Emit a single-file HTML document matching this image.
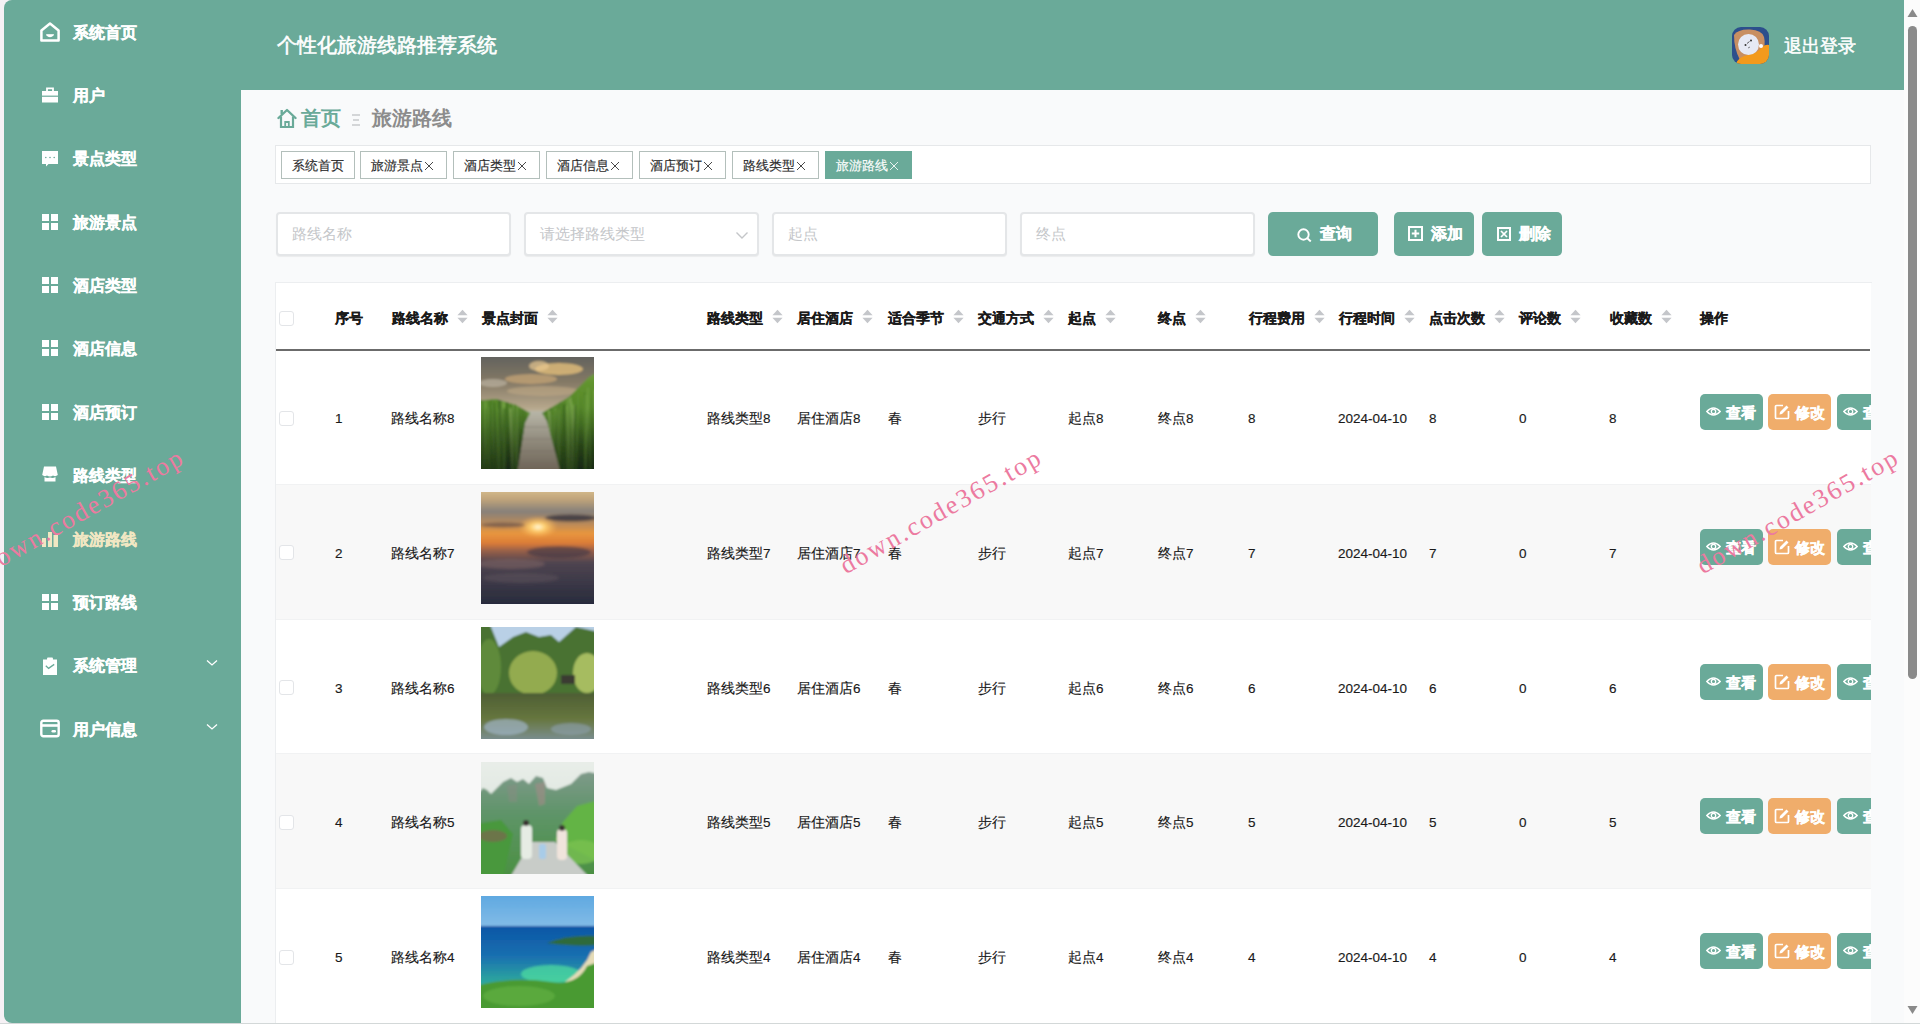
<!DOCTYPE html>
<html><head><meta charset="utf-8"><title>旅游路线</title>
<style>
*{box-sizing:border-box;margin:0;padding:0}
html,body{width:1920px;height:1024px;overflow:hidden}
body{position:relative;background:#f6f1f5;font-family:"Liberation Sans",sans-serif;color:#222}
.a{position:absolute}
.t{position:absolute;white-space:nowrap;line-height:1}
#side{left:4px;top:0;width:237px;height:1023px;background:#6aaa99;border-radius:8px 0 0 8px}
#head{left:241px;top:0;width:1663px;height:90px;background:#6aaa99}
#main{left:241px;top:90px;width:1663px;height:934px;background:#f9fafb}
#sbar{left:1904px;top:0;width:16px;height:1024px;background:#fcfcfc}
.mi{font-size:16px;font-weight:bold;-webkit-text-stroke:0.3px currentColor}
.tag{position:absolute;top:151px;height:28px;border:1px solid #b3bfbb;background:#fff;font-size:13px;color:#2a2a2a;-webkit-text-stroke:0.15px currentColor;line-height:28px;padding-left:10px;white-space:nowrap}
.tag.on{background:#6aaa99;border-color:#6aaa99;color:#fff}
.inp{position:absolute;top:212px;width:235px;height:44px;border:2px solid #e4e6e8;border-radius:4px;background:#fff;box-shadow:0 1px 1px rgba(0,0,0,.06)}
.ph{position:absolute;left:14px;top:12px;font-size:15px;line-height:16px;color:#c4c6c9;white-space:nowrap}
.btn{position:absolute;top:212px;height:44px;border-radius:5px;background:#6aaa99;color:#fff;font-size:16px;font-weight:bold;-webkit-text-stroke:0.3px #fff}
.th{position:absolute;top:311px;font-size:14px;font-weight:bold;line-height:14px;color:#1a1a1a;white-space:nowrap;-webkit-text-stroke:0.25px #1a1a1a}
.srt{display:inline-block;vertical-align:top;margin-left:9px;margin-top:-2px}
.td{position:absolute;font-size:13.5px;line-height:14px;color:#1a1a1a;white-space:nowrap;-webkit-text-stroke:0.15px #1a1a1a}
.ab{position:absolute;height:36px;width:63px;border-radius:5px;color:#fff;font-size:15px;font-weight:bold;-webkit-text-stroke:0.35px #fff}
.wm{position:absolute;font-family:"Liberation Serif",serif;font-size:26px;color:#ec7aa0;letter-spacing:2.25px;white-space:nowrap;transform-origin:0 100%;transform:rotate(-29.5deg);line-height:24px}
</style></head><body>

<div class="a" id="side"></div>
<div class="a" style="left:40px;top:21.6px;width:20px;height:20px"><svg width="20" height="20" viewBox="0 0 20 20"><path d="M10 1.6 L18.6 8.4 V18.6 H1.4 V8.4 Z" fill="none" stroke="#fff" stroke-width="2.5" stroke-linejoin="round"/><path d="M6.6 12.8 Q10 16.4 13.4 12.8 Z" fill="#fff" stroke="#fff" stroke-width="1.2" stroke-linejoin="round"/></svg></div>
<div class="t mi" style="left:73px;top:24.6px;color:#fff">系统首页</div>
<div class="a" style="left:40px;top:85.0px;width:20px;height:20px"><svg width="20" height="20" viewBox="0 0 20 20"><rect x="2" y="6" width="16" height="11.5" fill="#fff"/><path d="M7 6 V3.3 H13 V6" fill="none" stroke="#fff" stroke-width="1.8"/><rect x="2" y="10.6" width="16" height="1.2" fill="#6aaa99"/></svg></div>
<div class="t mi" style="left:73px;top:88.0px;color:#fff">用户</div>
<div class="a" style="left:40px;top:148.3px;width:20px;height:20px"><svg width="20" height="20" viewBox="0 0 20 20"><path d="M2 3 H18 V16 H8.5 L6 18.5 V16 H2 Z" fill="#fff"/><circle cx="5.8" cy="9.5" r="0.8" fill="#6aaa99"/><circle cx="10" cy="9.5" r="0.8" fill="#6aaa99"/><circle cx="14.2" cy="9.5" r="0.8" fill="#6aaa99"/></svg></div>
<div class="t mi" style="left:73px;top:151.3px;color:#fff">景点类型</div>
<div class="a" style="left:40px;top:211.7px;width:20px;height:20px"><svg width="20" height="20" viewBox="0 0 20 20"><rect x="2" y="2" width="7" height="7" fill="#fff"/><rect x="11" y="2" width="7" height="7" fill="#fff"/><rect x="2" y="11" width="7" height="7" fill="#fff"/><rect x="11" y="11" width="7" height="7" fill="#fff"/></svg></div>
<div class="t mi" style="left:73px;top:214.7px;color:#fff">旅游景点</div>
<div class="a" style="left:40px;top:275.1px;width:20px;height:20px"><svg width="20" height="20" viewBox="0 0 20 20"><rect x="2" y="2" width="7" height="7" fill="#fff"/><rect x="11" y="2" width="7" height="7" fill="#fff"/><rect x="2" y="11" width="7" height="7" fill="#fff"/><rect x="11" y="11" width="7" height="7" fill="#fff"/></svg></div>
<div class="t mi" style="left:73px;top:278.1px;color:#fff">酒店类型</div>
<div class="a" style="left:40px;top:338.4px;width:20px;height:20px"><svg width="20" height="20" viewBox="0 0 20 20"><rect x="2" y="2" width="7" height="7" fill="#fff"/><rect x="11" y="2" width="7" height="7" fill="#fff"/><rect x="2" y="11" width="7" height="7" fill="#fff"/><rect x="11" y="11" width="7" height="7" fill="#fff"/></svg></div>
<div class="t mi" style="left:73px;top:341.4px;color:#fff">酒店信息</div>
<div class="a" style="left:40px;top:401.8px;width:20px;height:20px"><svg width="20" height="20" viewBox="0 0 20 20"><rect x="2" y="2" width="7" height="7" fill="#fff"/><rect x="11" y="2" width="7" height="7" fill="#fff"/><rect x="2" y="11" width="7" height="7" fill="#fff"/><rect x="11" y="11" width="7" height="7" fill="#fff"/></svg></div>
<div class="t mi" style="left:73px;top:404.8px;color:#fff">酒店预订</div>
<div class="a" style="left:40px;top:465.2px;width:20px;height:20px"><svg width="20" height="20" viewBox="0 0 20 20"><path d="M4 1.5 H16 L17.8 10 Q15.5 12 13 10.5 Q10 12.3 7 10.5 Q4.5 12 2.2 10 Z" fill="#fff"/><path d="M4.5 12 Q7 13.5 10 12.5 Q13 13.5 15.5 12 V16.5 H4.5 Z" fill="#fff"/></svg></div>
<div class="t mi" style="left:73px;top:468.2px;color:#fff">路线类型</div>
<div class="a" style="left:40px;top:528.6px;width:20px;height:20px"><svg width="20" height="20" viewBox="0 0 20 20"><rect x="2" y="9" width="4" height="9" fill="#f1e7c3"/><rect x="8" y="3" width="4" height="15" fill="#f1e7c3"/><rect x="13.5" y="6" width="4.5" height="12" fill="#f1e7c3"/></svg></div>
<div class="t mi" style="left:73px;top:531.6px;color:#f1e7c3">旅游路线</div>
<div class="a" style="left:40px;top:591.9px;width:20px;height:20px"><svg width="20" height="20" viewBox="0 0 20 20"><rect x="2" y="2" width="7" height="7" fill="#fff"/><rect x="11" y="2" width="7" height="7" fill="#fff"/><rect x="2" y="11" width="7" height="7" fill="#fff"/><rect x="11" y="11" width="7" height="7" fill="#fff"/></svg></div>
<div class="t mi" style="left:73px;top:594.9px;color:#fff">预订路线</div>
<div class="a" style="left:40px;top:655.3px;width:20px;height:20px"><svg width="20" height="20" viewBox="0 0 20 20"><rect x="3" y="4.5" width="14" height="15.5" fill="#fff"/><rect x="7" y="2.6" width="6" height="3" rx="1" fill="#fff"/><path d="M5.8 10.8 L8.6 13.4 L14.2 9.4" fill="none" stroke="#6aaa99" stroke-width="1.3"/></svg></div>
<div class="t mi" style="left:73px;top:658.3px;color:#fff">系统管理</div>
<svg class="a" style="left:206px;top:659.3px" width="12" height="8" viewBox="0 0 12 8"><path d="M1 1.5 L6 6 L11 1.5" fill="none" stroke="#fff" stroke-width="1.3"/></svg>
<div class="a" style="left:40px;top:718.7px;width:20px;height:20px"><svg width="20" height="20" viewBox="0 0 20 20"><rect x="1.3" y="1.8" width="17.4" height="15.4" rx="2" fill="none" stroke="#fff" stroke-width="2.4"/><rect x="1.2" y="5.2" width="17.6" height="2.6" fill="#fff"/><rect x="11.5" y="11" width="4.5" height="2.6" rx="1.3" fill="#fff"/></svg></div>
<div class="t mi" style="left:73px;top:721.7px;color:#fff">用户信息</div>
<svg class="a" style="left:206px;top:722.7px" width="12" height="8" viewBox="0 0 12 8"><path d="M1 1.5 L6 6 L11 1.5" fill="none" stroke="#fff" stroke-width="1.3"/></svg>
<div class="a" id="head"></div>
<div class="t" style="left:277px;top:35px;font-size:20px;color:#fff;-webkit-text-stroke:0.6px #fff">个性化旅游线路推荐系统</div>
<svg class="a" style="left:1732px;top:27px" width="37" height="37" viewBox="0 0 37 37">
<defs><clipPath id="avc"><rect x="0" y="0" width="37" height="37" rx="9"/></clipPath></defs>
<g clip-path="url(#avc)"><rect width="37" height="37" fill="#2c4f8c"/>
<path d="M2 8 Q6 2 18 2.5 Q30 3 32 10 Q34 18 30 26 L8 33 Q2 22 2 8 Z" fill="#c88f62"/>
<path d="M4 37 Q6 30 16 28 Q26 26 30 20 Q34 17 37 18 L37 37 Z" fill="#f39a1c"/>
<circle cx="16.5" cy="17.5" r="10.5" fill="#e6e9f4"/>
<circle cx="13.5" cy="18" r="1" fill="#333"/><circle cx="19" cy="13.5" r="1" fill="#333"/><path d="M15 16.5 L17.5 14.5" stroke="#333" stroke-width="0.8"/><path d="M16 21 L18 20" stroke="#555" stroke-width="0.7"/>
<circle cx="29" cy="19" r="2" fill="#fff"/></g></svg>
<div class="t" style="left:1784px;top:37px;font-size:18px;color:#fff;-webkit-text-stroke:0.5px #fff">退出登录</div>
<div class="a" id="main"></div>
<svg class="a" style="left:277px;top:108px" width="20" height="21" viewBox="0 0 20 21"><path d="M1.5 10 L10 2 L18.5 10" fill="none" stroke="#6aaa99" stroke-width="2.4" stroke-linejoin="round" stroke-linecap="round"/><path d="M4 8.5 V19 H16 V8.5" fill="none" stroke="#6aaa99" stroke-width="2.2"/><path d="M8.2 19 V14 H11.8 V19" fill="none" stroke="#6aaa99" stroke-width="1.8"/><rect x="3.5" y="2" width="2.4" height="4" fill="#6aaa99"/></svg>
<div class="t" style="left:301px;top:108px;font-size:20px;font-weight:bold;color:#6aaa99">首页</div>
<div class="a" style="left:352px;top:114px;width:8px;height:1.5px;background:#d4d6d8"></div><div class="a" style="left:353px;top:119px;width:6px;height:1.5px;background:#d4d6d8"></div><div class="a" style="left:352px;top:124px;width:8px;height:1.5px;background:#d4d6d8"></div>
<div class="t" style="left:372px;top:108px;font-size:20px;font-weight:bold;color:#8c8c8c">旅游路线</div>
<div class="a" style="left:275px;top:145px;width:1596px;height:39px;background:#fff;border:1px solid #e6e8ea"></div>
<div class="tag" style="left:281px;width:74px">系统首页</div>
<div class="tag" style="left:360px;width:87px">旅游景点<svg style="display:inline-block;vertical-align:top;margin-top:9px;margin-left:1px" width="10" height="10" viewBox="0 0 10 10"><path d="M1 1 L9 9 M9 1 L1 9" stroke="currentColor" stroke-width="1" opacity="0.85"/></svg></div>
<div class="tag" style="left:453px;width:87px">酒店类型<svg style="display:inline-block;vertical-align:top;margin-top:9px;margin-left:1px" width="10" height="10" viewBox="0 0 10 10"><path d="M1 1 L9 9 M9 1 L1 9" stroke="currentColor" stroke-width="1" opacity="0.85"/></svg></div>
<div class="tag" style="left:546px;width:87px">酒店信息<svg style="display:inline-block;vertical-align:top;margin-top:9px;margin-left:1px" width="10" height="10" viewBox="0 0 10 10"><path d="M1 1 L9 9 M9 1 L1 9" stroke="currentColor" stroke-width="1" opacity="0.85"/></svg></div>
<div class="tag" style="left:639px;width:87px">酒店预订<svg style="display:inline-block;vertical-align:top;margin-top:9px;margin-left:1px" width="10" height="10" viewBox="0 0 10 10"><path d="M1 1 L9 9 M9 1 L1 9" stroke="currentColor" stroke-width="1" opacity="0.85"/></svg></div>
<div class="tag" style="left:732px;width:87px">路线类型<svg style="display:inline-block;vertical-align:top;margin-top:9px;margin-left:1px" width="10" height="10" viewBox="0 0 10 10"><path d="M1 1 L9 9 M9 1 L1 9" stroke="currentColor" stroke-width="1" opacity="0.85"/></svg></div>
<div class="tag on" style="left:825px;width:87px">旅游路线<svg style="display:inline-block;vertical-align:top;margin-top:9px;margin-left:1px" width="10" height="10" viewBox="0 0 10 10"><path d="M1 1 L9 9 M9 1 L1 9" stroke="currentColor" stroke-width="1" opacity="0.85"/></svg></div>
<div class="inp" style="left:276px"><div class="ph">路线名称</div></div>
<div class="inp" style="left:524px"><div class="ph">请选择路线类型</div><svg class="a" style="left:209px;top:17px" width="14" height="9" viewBox="0 0 14 9"><path d="M1.5 1.5 L7 7 L12.5 1.5" fill="none" stroke="#c4c6c9" stroke-width="1.4"/></svg></div>
<div class="inp" style="left:772px"><div class="ph">起点</div></div>
<div class="inp" style="left:1020px"><div class="ph">终点</div></div>
<div class="btn" style="left:1268px;width:110px"><svg class="a" style="left:29px;top:16px" width="15" height="14" viewBox="0 0 15 14"><circle cx="6.5" cy="6.5" r="5.2" fill="none" stroke="#fff" stroke-width="1.9"/><path d="M10.3 10.3 L13.8 13.5" stroke="#fff" stroke-width="1.9"/></svg><div class="t" style="left:52px;top:14px">查询</div></div>
<div class="btn" style="left:1394px;width:80px"><svg class="a" style="left:14px;top:14px" width="15" height="15" viewBox="0 0 15 15"><rect x="1" y="1" width="13" height="13" fill="none" stroke="#fff" stroke-width="2"/><path d="M7.5 3.8 V11.2 M3.8 7.5 H11.2" stroke="#fff" stroke-width="2"/></svg><div class="t" style="left:37px;top:14px">添加</div></div>
<div class="btn" style="left:1482px;width:80px"><svg class="a" style="left:15px;top:15px" width="14" height="14" viewBox="0 0 14 14"><rect x="1" y="1" width="12" height="12" fill="none" stroke="#fff" stroke-width="2"/><path d="M4 4 L10 10 M10 4 L4 10" stroke="#fff" stroke-width="1.7"/></svg><div class="t" style="left:37px;top:14px">删除</div></div>
<div class="a" style="left:275px;top:283px;width:1px;height:741px;background:#eceef0"></div>
<div class="a" style="left:275px;top:282px;width:1597px;height:1px;background:#eceef0"></div>
<div class="a" style="left:276px;top:283px;width:1595px;height:741px;background:#fff;overflow:hidden" id="tbl">
<div class="a" style="left:0;top:67.00px;width:1595px;height:134.75px;background:#fff;border-bottom:1px solid #f1f2f3"></div>
<div class="a" style="left:0;top:201.75px;width:1595px;height:134.75px;background:#f8f8f8;border-bottom:1px solid #f1f2f3"></div>
<div class="a" style="left:0;top:336.50px;width:1595px;height:134.75px;background:#fff;border-bottom:1px solid #f1f2f3"></div>
<div class="a" style="left:0;top:471.25px;width:1595px;height:134.75px;background:#f8f8f8;border-bottom:1px solid #f1f2f3"></div>
<div class="a" style="left:0;top:606.00px;width:1595px;height:134.75px;background:#fff;border-bottom:1px solid #f1f2f3"></div>
<div class="a" style="left:0;top:66px;width:1594px;height:2px;background:#6b6b6b"></div>
<div class="a" style="left:3px;top:28px;width:15px;height:15px;border:1px solid #e3e5e8;border-radius:3px;background:#fff"></div>
<div class="th" style="left:59.0px;top:28px">序号</div>
<div class="th" style="left:116.0px;top:28px">路线名称<svg class="srt" width="11" height="15" viewBox="0 0 11 15"><path d="M5.5 0.8 L10.6 6.2 H0.4 Z" fill="#c4c6ca"/><path d="M5.5 14.2 L10.6 8.8 H0.4 Z" fill="#c4c6ca"/></svg></div>
<div class="th" style="left:206.0px;top:28px">景点封面<svg class="srt" width="11" height="15" viewBox="0 0 11 15"><path d="M5.5 0.8 L10.6 6.2 H0.4 Z" fill="#c4c6ca"/><path d="M5.5 14.2 L10.6 8.8 H0.4 Z" fill="#c4c6ca"/></svg></div>
<div class="th" style="left:431.0px;top:28px">路线类型<svg class="srt" width="11" height="15" viewBox="0 0 11 15"><path d="M5.5 0.8 L10.6 6.2 H0.4 Z" fill="#c4c6ca"/><path d="M5.5 14.2 L10.6 8.8 H0.4 Z" fill="#c4c6ca"/></svg></div>
<div class="th" style="left:521.3px;top:28px">居住酒店<svg class="srt" width="11" height="15" viewBox="0 0 11 15"><path d="M5.5 0.8 L10.6 6.2 H0.4 Z" fill="#c4c6ca"/><path d="M5.5 14.2 L10.6 8.8 H0.4 Z" fill="#c4c6ca"/></svg></div>
<div class="th" style="left:611.5px;top:28px">适合季节<svg class="srt" width="11" height="15" viewBox="0 0 11 15"><path d="M5.5 0.8 L10.6 6.2 H0.4 Z" fill="#c4c6ca"/><path d="M5.5 14.2 L10.6 8.8 H0.4 Z" fill="#c4c6ca"/></svg></div>
<div class="th" style="left:701.8px;top:28px">交通方式<svg class="srt" width="11" height="15" viewBox="0 0 11 15"><path d="M5.5 0.8 L10.6 6.2 H0.4 Z" fill="#c4c6ca"/><path d="M5.5 14.2 L10.6 8.8 H0.4 Z" fill="#c4c6ca"/></svg></div>
<div class="th" style="left:792.1px;top:28px">起点<svg class="srt" width="11" height="15" viewBox="0 0 11 15"><path d="M5.5 0.8 L10.6 6.2 H0.4 Z" fill="#c4c6ca"/><path d="M5.5 14.2 L10.6 8.8 H0.4 Z" fill="#c4c6ca"/></svg></div>
<div class="th" style="left:882.3px;top:28px">终点<svg class="srt" width="11" height="15" viewBox="0 0 11 15"><path d="M5.5 0.8 L10.6 6.2 H0.4 Z" fill="#c4c6ca"/><path d="M5.5 14.2 L10.6 8.8 H0.4 Z" fill="#c4c6ca"/></svg></div>
<div class="th" style="left:972.6px;top:28px">行程费用<svg class="srt" width="11" height="15" viewBox="0 0 11 15"><path d="M5.5 0.8 L10.6 6.2 H0.4 Z" fill="#c4c6ca"/><path d="M5.5 14.2 L10.6 8.8 H0.4 Z" fill="#c4c6ca"/></svg></div>
<div class="th" style="left:1062.9px;top:28px">行程时间<svg class="srt" width="11" height="15" viewBox="0 0 11 15"><path d="M5.5 0.8 L10.6 6.2 H0.4 Z" fill="#c4c6ca"/><path d="M5.5 14.2 L10.6 8.8 H0.4 Z" fill="#c4c6ca"/></svg></div>
<div class="th" style="left:1153.2px;top:28px">点击次数<svg class="srt" width="11" height="15" viewBox="0 0 11 15"><path d="M5.5 0.8 L10.6 6.2 H0.4 Z" fill="#c4c6ca"/><path d="M5.5 14.2 L10.6 8.8 H0.4 Z" fill="#c4c6ca"/></svg></div>
<div class="th" style="left:1243.4px;top:28px">评论数<svg class="srt" width="11" height="15" viewBox="0 0 11 15"><path d="M5.5 0.8 L10.6 6.2 H0.4 Z" fill="#c4c6ca"/><path d="M5.5 14.2 L10.6 8.8 H0.4 Z" fill="#c4c6ca"/></svg></div>
<div class="th" style="left:1333.7px;top:28px">收藏数<svg class="srt" width="11" height="15" viewBox="0 0 11 15"><path d="M5.5 0.8 L10.6 6.2 H0.4 Z" fill="#c4c6ca"/><path d="M5.5 14.2 L10.6 8.8 H0.4 Z" fill="#c4c6ca"/></svg></div>
<div class="th" style="left:1424.0px;top:28px">操作</div>
<div class="a" style="left:3px;top:127.5px;width:15px;height:15px;border:1px solid #e3e5e8;border-radius:3px;background:#fff"></div>
<div class="td" style="left:59px;top:129.0px">1</div>
<div class="td" style="left:115px;top:129.0px">路线名称8</div>
<div class="td" style="left:431px;top:129.0px">路线类型8</div>
<div class="td" style="left:521px;top:129.0px">居住酒店8</div>
<div class="td" style="left:612px;top:129.0px">春</div>
<div class="td" style="left:702px;top:129.0px">步行</div>
<div class="td" style="left:792px;top:129.0px">起点8</div>
<div class="td" style="left:882px;top:129.0px">终点8</div>
<div class="td" style="left:972px;top:129.0px">8</div>
<div class="td" style="left:1062px;top:129.0px">2024-04-10</div>
<div class="td" style="left:1153px;top:129.0px">8</div>
<div class="td" style="left:1243px;top:129.0px">0</div>
<div class="td" style="left:1333px;top:129.0px">8</div>
<div class="a" style="left:205px;top:74.3px;width:113px;height:112px;overflow:hidden"><svg width="113" height="112" viewBox="0 0 113 112"><defs>
<filter id="b0" x="-10%" y="-10%" width="120%" height="120%"><feGaussianBlur stdDeviation="0.9"/></filter>
<linearGradient id="s0" x1="0" y1="0" x2="0" y2="1"><stop offset="0" stop-color="#5c5e5c"/><stop offset="0.25" stop-color="#857a66"/><stop offset="0.45" stop-color="#b4a58a"/><stop offset="0.55" stop-color="#cfc4ae"/></linearGradient>
<linearGradient id="g0" x1="0" y1="0" x2="0" y2="1"><stop offset="0" stop-color="#8fa86a"/><stop offset="0.25" stop-color="#62942e"/><stop offset="0.6" stop-color="#4a7a26"/><stop offset="1" stop-color="#1e3014"/></linearGradient>
<linearGradient id="d0" x1="0" y1="0" x2="0" y2="1"><stop offset="0.45" stop-color="#142410" stop-opacity="0"/><stop offset="1" stop-color="#142410" stop-opacity="0.75"/></linearGradient>
<linearGradient id="p0" x1="0" y1="0" x2="0" y2="1"><stop offset="0" stop-color="#b8b6a8"/><stop offset="0.5" stop-color="#8e887a"/><stop offset="1" stop-color="#6a6052"/></linearGradient>
<clipPath id="cl0"><path d="M-5 44 L15 42 L35 48 L49 56 L44 66 L36 117 L-5 117 Z"/><path d="M118 14 L108 20 L88 40 L61 56 L66 64 L80 117 L118 117 Z"/></clipPath></defs>
<g filter="url(#b0)">
<rect x="-5" y="-5" width="123" height="122" fill="url(#s0)"/>
<ellipse cx="78" cy="12" rx="24" ry="6" fill="#dcb878" opacity="0.85"/>
<ellipse cx="58" cy="9" rx="10" ry="5" fill="#e8c890" opacity="0.7"/>
<ellipse cx="50" cy="22" rx="26" ry="5" fill="#c9a676" opacity="0.7"/>
<ellipse cx="62" cy="34" rx="36" ry="5" fill="#c2ab86" opacity="0.55"/>
<ellipse cx="12" cy="26" rx="14" ry="4" fill="#d0c8b8" opacity="0.5"/>
<path d="M44 54 L66 54 L86 117 L28 117 Z" fill="url(#p0)"/>
<path d="M40 70 H70 M38 82 H74 M36 94 H77 M34 106 H80" stroke="#6e665a" stroke-width="0.8" opacity="0.5"/>
<g clip-path="url(#cl0)"><rect x="-5" y="-5" width="123" height="122" fill="url(#g0)"/>
<path d="M13.5 117 Q12.2 78.6 11.0 40.1" stroke="#7aa848" stroke-width="1.5" fill="none" opacity="0.75"/>
<path d="M80.5 117 Q79.6 80.2 78.8 43.4" stroke="#3d6a22" stroke-width="1.1" fill="none" opacity="0.75"/>
<path d="M18.3 117 Q18.1 79.2 17.9 41.4" stroke="#3d6a22" stroke-width="1.8" fill="none" opacity="0.75"/>
<path d="M66.9 117 Q68.3 84.9 69.6 52.9" stroke="#3d6a22" stroke-width="1.6" fill="none" opacity="0.75"/>
<path d="M17.2 117 Q17.4 84.3 17.6 51.7" stroke="#7aa848" stroke-width="1.1" fill="none" opacity="0.75"/>
<path d="M83.5 117 Q82.9 82.3 82.3 47.6" stroke="#3d6a22" stroke-width="1.8" fill="none" opacity="0.75"/>
<path d="M6.2 117 Q5.8 81.6 5.5 46.1" stroke="#5f9232" stroke-width="1.5" fill="none" opacity="0.75"/>
<path d="M63.5 117 Q63.5 84.9 63.5 52.8" stroke="#5f9232" stroke-width="1.5" fill="none" opacity="0.75"/>
<path d="M36.6 117 Q36.2 80.8 35.8 44.5" stroke="#94b864" stroke-width="1.2" fill="none" opacity="0.75"/>
<path d="M70.1 117 Q70.3 87.4 70.5 57.8" stroke="#7aa848" stroke-width="1.5" fill="none" opacity="0.75"/>
<path d="M41.6 117 Q42.0 82.6 42.3 48.2" stroke="#4a7a26" stroke-width="1.1" fill="none" opacity="0.75"/>
<path d="M88.7 117 Q87.6 78.6 86.6 40.2" stroke="#4a7a26" stroke-width="1.5" fill="none" opacity="0.75"/>
<path d="M-1.0 117 Q-0.8 82.2 -0.6 47.4" stroke="#3d6a22" stroke-width="1.9" fill="none" opacity="0.75"/>
<path d="M77.6 117 Q77.6 84.8 77.5 52.7" stroke="#3d6a22" stroke-width="1.8" fill="none" opacity="0.75"/>
<path d="M0.5 117 Q0.4 78.2 0.4 39.3" stroke="#4a7a26" stroke-width="1.7" fill="none" opacity="0.75"/>
<path d="M63.4 117 Q64.9 88.8 66.4 60.5" stroke="#3d6a22" stroke-width="1.8" fill="none" opacity="0.75"/>
<path d="M11.5 117 Q10.1 80.2 8.6 43.4" stroke="#4a7a26" stroke-width="1.5" fill="none" opacity="0.75"/>
<path d="M69.4 117 Q68.6 83.6 67.7 50.2" stroke="#7aa848" stroke-width="1.3" fill="none" opacity="0.75"/>
<path d="M34.7 117 Q33.4 80.3 32.1 43.6" stroke="#94b864" stroke-width="1.4" fill="none" opacity="0.75"/>
<path d="M90.8 117 Q91.9 82.3 93.0 47.7" stroke="#94b864" stroke-width="1.3" fill="none" opacity="0.75"/>
<path d="M18.2 117 Q19.6 80.0 20.9 43.0" stroke="#94b864" stroke-width="1.2" fill="none" opacity="0.75"/>
<path d="M69.9 117 Q68.4 84.2 66.9 51.4" stroke="#5f9232" stroke-width="1.8" fill="none" opacity="0.75"/>
<path d="M6.3 117 Q6.1 79.5 5.8 41.9" stroke="#5f9232" stroke-width="1.4" fill="none" opacity="0.75"/>
<path d="M91.7 117 Q93.1 82.5 94.4 48.0" stroke="#3d6a22" stroke-width="1.7" fill="none" opacity="0.75"/>
<path d="M34.7 117 Q34.4 80.7 34.1 44.4" stroke="#3d6a22" stroke-width="1.4" fill="none" opacity="0.75"/>
<path d="M65.8 117 Q64.9 87.7 63.9 58.4" stroke="#7aa848" stroke-width="2.0" fill="none" opacity="0.75"/>
<path d="M19.5 117 Q18.1 78.3 16.8 39.5" stroke="#3d6a22" stroke-width="1.0" fill="none" opacity="0.75"/>
<path d="M68.5 117 Q68.8 83.8 69.2 50.6" stroke="#4a7a26" stroke-width="1.1" fill="none" opacity="0.75"/>
<path d="M7.6 117 Q9.0 80.1 10.3 43.3" stroke="#4a7a26" stroke-width="1.6" fill="none" opacity="0.75"/>
<path d="M86.6 117 Q88.0 78.9 89.5 40.8" stroke="#94b864" stroke-width="1.5" fill="none" opacity="0.75"/>
<path d="M21.7 117 Q22.4 78.1 23.2 39.2" stroke="#7aa848" stroke-width="1.7" fill="none" opacity="0.75"/>
<path d="M86.8 117 Q85.4 82.3 83.9 47.6" stroke="#3d6a22" stroke-width="2.0" fill="none" opacity="0.75"/>
<path d="M23.9 117 Q25.2 78.5 26.4 40.1" stroke="#3d6a22" stroke-width="1.8" fill="none" opacity="0.75"/>
<path d="M76.7 117 Q77.3 84.8 77.9 52.5" stroke="#7aa848" stroke-width="1.3" fill="none" opacity="0.75"/>
<path d="M15.7 117 Q15.8 78.7 15.9 40.3" stroke="#5f9232" stroke-width="1.8" fill="none" opacity="0.75"/>
<path d="M78.5 117 Q79.4 81.8 80.3 46.5" stroke="#5f9232" stroke-width="1.8" fill="none" opacity="0.75"/>
<path d="M34.7 117 Q34.7 79.1 34.7 41.2" stroke="#3d6a22" stroke-width="1.7" fill="none" opacity="0.75"/>
<path d="M115.4 117 Q114.7 75.0 114.0 33.0" stroke="#94b864" stroke-width="1.7" fill="none" opacity="0.75"/>
<path d="M45.8 117 Q47.1 80.6 48.5 44.3" stroke="#4a7a26" stroke-width="1.4" fill="none" opacity="0.75"/>
<path d="M72.3 117 Q71.9 83.5 71.4 49.9" stroke="#5f9232" stroke-width="1.5" fill="none" opacity="0.75"/>
<path d="M47.2 117 Q47.2 81.8 47.1 46.5" stroke="#7aa848" stroke-width="1.7" fill="none" opacity="0.75"/>
<path d="M104.8 117 Q106.0 73.7 107.2 30.4" stroke="#7aa848" stroke-width="1.8" fill="none" opacity="0.75"/>
<path d="M35.3 117 Q35.1 80.8 34.9 44.7" stroke="#5f9232" stroke-width="1.6" fill="none" opacity="0.75"/>
<path d="M64.9 117 Q64.7 89.8 64.6 62.7" stroke="#94b864" stroke-width="1.7" fill="none" opacity="0.75"/>
<path d="M1.3 117 Q-0.1 78.6 -1.5 40.2" stroke="#5f9232" stroke-width="1.6" fill="none" opacity="0.75"/>
<path d="M86.1 117 Q87.0 82.3 88.0 47.5" stroke="#3d6a22" stroke-width="2.0" fill="none" opacity="0.75"/>
<path d="M30.5 117 Q30.7 80.0 30.8 42.9" stroke="#3d6a22" stroke-width="1.0" fill="none" opacity="0.75"/>
<path d="M104.8 117 Q104.8 77.5 104.9 38.1" stroke="#7aa848" stroke-width="1.9" fill="none" opacity="0.75"/>
<path d="M19.1 117 Q17.7 83.6 16.3 50.2" stroke="#5f9232" stroke-width="1.2" fill="none" opacity="0.75"/>
<path d="M88.1 117 Q87.3 82.4 86.6 47.7" stroke="#4a7a26" stroke-width="1.4" fill="none" opacity="0.75"/>
<path d="M3.7 117 Q4.9 83.9 6.1 50.7" stroke="#4a7a26" stroke-width="1.7" fill="none" opacity="0.75"/>
<path d="M105.6 117 Q104.5 76.0 103.4 35.1" stroke="#3d6a22" stroke-width="1.2" fill="none" opacity="0.75"/>
<path d="M23.0 117 Q23.4 83.6 23.7 50.2" stroke="#5f9232" stroke-width="1.8" fill="none" opacity="0.75"/>
<path d="M68.4 117 Q69.1 84.0 69.7 51.1" stroke="#3d6a22" stroke-width="1.6" fill="none" opacity="0.75"/>
<path d="M13.6 117 Q13.6 81.1 13.5 45.3" stroke="#3d6a22" stroke-width="1.8" fill="none" opacity="0.75"/>
<path d="M109.5 117 Q108.8 72.2 108.1 27.5" stroke="#5f9232" stroke-width="1.8" fill="none" opacity="0.75"/>
<path d="M22.9 117 Q22.7 81.4 22.6 45.9" stroke="#7aa848" stroke-width="1.6" fill="none" opacity="0.75"/>
<path d="M88.3 117 Q88.2 80.8 88.0 44.6" stroke="#4a7a26" stroke-width="1.5" fill="none" opacity="0.75"/>
<path d="M21.4 117 Q22.5 84.1 23.6 51.2" stroke="#3d6a22" stroke-width="1.9" fill="none" opacity="0.75"/>
<path d="M74.5 117 Q75.6 84.9 76.6 52.7" stroke="#5f9232" stroke-width="1.1" fill="none" opacity="0.75"/>
<path d="M3.2 117 Q3.7 80.6 4.2 44.2" stroke="#7aa848" stroke-width="1.4" fill="none" opacity="0.75"/>
<path d="M71.9 117 Q73.1 84.0 74.3 51.1" stroke="#7aa848" stroke-width="1.2" fill="none" opacity="0.75"/>
<path d="M33.5 117 Q32.8 82.1 32.0 47.2" stroke="#5f9232" stroke-width="1.1" fill="none" opacity="0.75"/>
<path d="M86.2 117 Q85.9 82.8 85.6 48.6" stroke="#7aa848" stroke-width="1.5" fill="none" opacity="0.75"/>
<path d="M47.5 117 Q48.1 83.3 48.7 49.7" stroke="#5f9232" stroke-width="2.0" fill="none" opacity="0.75"/>
<path d="M82.6 117 Q82.1 81.8 81.5 46.6" stroke="#4a7a26" stroke-width="1.7" fill="none" opacity="0.75"/>
<path d="M-2.0 117 Q-1.4 81.4 -0.8 45.8" stroke="#94b864" stroke-width="1.4" fill="none" opacity="0.75"/>
<path d="M89.0 117 Q87.8 79.3 86.7 41.6" stroke="#7aa848" stroke-width="1.9" fill="none" opacity="0.75"/>
<path d="M8.7 117 Q8.0 83.6 7.2 50.3" stroke="#7aa848" stroke-width="1.0" fill="none" opacity="0.75"/>
<path d="M103.6 117 Q104.6 75.1 105.5 33.3" stroke="#5f9232" stroke-width="1.8" fill="none" opacity="0.75"/>
<path d="M31.5 117 Q30.4 84.1 29.4 51.2" stroke="#94b864" stroke-width="1.9" fill="none" opacity="0.75"/>
<path d="M92.0 117 Q91.3 80.9 90.6 44.8" stroke="#7aa848" stroke-width="1.8" fill="none" opacity="0.75"/>
<path d="M6.4 117 Q7.7 83.8 9.0 50.5" stroke="#4a7a26" stroke-width="1.6" fill="none" opacity="0.75"/>
<path d="M104.9 117 Q103.6 73.7 102.3 30.3" stroke="#5f9232" stroke-width="1.9" fill="none" opacity="0.75"/>
<path d="M20.1 117 Q19.9 79.9 19.6 42.7" stroke="#3d6a22" stroke-width="1.9" fill="none" opacity="0.75"/>
<path d="M94.8 117 Q96.1 76.2 97.4 35.4" stroke="#5f9232" stroke-width="2.0" fill="none" opacity="0.75"/>
<path d="M10.4 117 Q10.7 78.8 11.1 40.5" stroke="#4a7a26" stroke-width="1.5" fill="none" opacity="0.75"/>
<path d="M71.5 117 Q70.8 85.0 70.2 53.0" stroke="#5f9232" stroke-width="1.8" fill="none" opacity="0.75"/>
<path d="M47.7 117 Q48.4 77.8 49.1 38.5" stroke="#7aa848" stroke-width="1.6" fill="none" opacity="0.75"/>
<path d="M70.6 117 Q69.4 85.4 68.2 53.9" stroke="#94b864" stroke-width="1.8" fill="none" opacity="0.75"/>
<rect x="-5" y="-5" width="123" height="122" fill="url(#d0)"/></g>
</g></svg></div>
<div class="ab" style="left:1424px;top:111.0px;background:#6aaa99"><svg class="a" style="left:6px;top:12px" width="15" height="11" viewBox="0 0 15 11"><path d="M0.8 5.5 Q7.5 -1.5 14.2 5.5 Q7.5 12.5 0.8 5.5 Z" fill="none" stroke="#fff" stroke-width="1.4"/><circle cx="7.5" cy="5.5" r="2.2" fill="none" stroke="#fff" stroke-width="1.3"/></svg><div class="t" style="left:26px;top:11px">查看</div></div>
<div class="ab" style="left:1492px;top:111.0px;background:#f0ad6b"><svg class="a" style="left:6px;top:10px" width="16" height="16" viewBox="0 0 16 16"><path d="M9 1.5 H2.5 Q1.5 1.5 1.5 2.5 V13.5 Q1.5 14.5 2.5 14.5 H13.5 Q14.5 14.5 14.5 13.5 V7" fill="none" stroke="#fff" stroke-width="1.7"/><path d="M5.5 10.5 L6 8 L12.5 1.5 L14.5 3.5 L8 10 Z" fill="#fff"/></svg><div class="t" style="left:27px;top:11px">修改</div></div>
<div class="ab" style="left:1561px;top:111.0px;background:#6aaa99"><svg class="a" style="left:6px;top:12px" width="15" height="11" viewBox="0 0 15 11"><path d="M0.8 5.5 Q7.5 -1.5 14.2 5.5 Q7.5 12.5 0.8 5.5 Z" fill="none" stroke="#fff" stroke-width="1.4"/><circle cx="7.5" cy="5.5" r="2.2" fill="none" stroke="#fff" stroke-width="1.3"/></svg><div class="t" style="left:26px;top:11px">查看</div></div>
<div class="a" style="left:3px;top:262.2px;width:15px;height:15px;border:1px solid #e3e5e8;border-radius:3px;background:#fff"></div>
<div class="td" style="left:59px;top:263.8px">2</div>
<div class="td" style="left:115px;top:263.8px">路线名称7</div>
<div class="td" style="left:431px;top:263.8px">路线类型7</div>
<div class="td" style="left:521px;top:263.8px">居住酒店7</div>
<div class="td" style="left:612px;top:263.8px">春</div>
<div class="td" style="left:702px;top:263.8px">步行</div>
<div class="td" style="left:792px;top:263.8px">起点7</div>
<div class="td" style="left:882px;top:263.8px">终点7</div>
<div class="td" style="left:972px;top:263.8px">7</div>
<div class="td" style="left:1062px;top:263.8px">2024-04-10</div>
<div class="td" style="left:1153px;top:263.8px">7</div>
<div class="td" style="left:1243px;top:263.8px">0</div>
<div class="td" style="left:1333px;top:263.8px">7</div>
<div class="a" style="left:205px;top:209.1px;width:113px;height:112px;overflow:hidden"><svg width="113" height="112" viewBox="0 0 113 112"><defs>
<filter id="b1" x="-10%" y="-10%" width="120%" height="120%"><feGaussianBlur stdDeviation="1.5"/></filter>
<linearGradient id="s1" x1="0" y1="0" x2="0" y2="1"><stop offset="0" stop-color="#dcc394"/><stop offset="0.1" stop-color="#c0a47a"/><stop offset="0.2" stop-color="#86807a"/><stop offset="0.3" stop-color="#b88a5a"/><stop offset="0.38" stop-color="#e8963e"/><stop offset="0.46" stop-color="#dc7c36"/><stop offset="0.52" stop-color="#9a6048"/><stop offset="0.62" stop-color="#4e4450"/><stop offset="1" stop-color="#23283a"/></linearGradient>
<radialGradient id="sun1" cx="0.5" cy="0.5" r="0.5"><stop offset="0" stop-color="#fffae0"/><stop offset="0.35" stop-color="#ffd070"/><stop offset="1" stop-color="#ffb050" stop-opacity="0"/></radialGradient></defs>
<g filter="url(#b1)">
<rect x="-5" y="-5" width="123" height="122" fill="url(#s1)"/>
<ellipse cx="57" cy="35" rx="20" ry="11" fill="url(#sun1)"/>
<ellipse cx="90" cy="26" rx="26" ry="3.5" fill="#3a3640" opacity="0.85"/>
<ellipse cx="22" cy="33" rx="22" ry="2.5" fill="#5a4848" opacity="0.6"/>
<ellipse cx="30" cy="72" rx="34" ry="5" fill="#8a6a68" opacity="0.45"/>
<ellipse cx="78" cy="60" rx="32" ry="6" fill="#3a3444" opacity="0.6"/>
<ellipse cx="40" cy="86" rx="38" ry="5" fill="#6a5a62" opacity="0.4"/>
</g></svg></div>
<div class="ab" style="left:1424px;top:245.8px;background:#6aaa99"><svg class="a" style="left:6px;top:12px" width="15" height="11" viewBox="0 0 15 11"><path d="M0.8 5.5 Q7.5 -1.5 14.2 5.5 Q7.5 12.5 0.8 5.5 Z" fill="none" stroke="#fff" stroke-width="1.4"/><circle cx="7.5" cy="5.5" r="2.2" fill="none" stroke="#fff" stroke-width="1.3"/></svg><div class="t" style="left:26px;top:11px">查看</div></div>
<div class="ab" style="left:1492px;top:245.8px;background:#f0ad6b"><svg class="a" style="left:6px;top:10px" width="16" height="16" viewBox="0 0 16 16"><path d="M9 1.5 H2.5 Q1.5 1.5 1.5 2.5 V13.5 Q1.5 14.5 2.5 14.5 H13.5 Q14.5 14.5 14.5 13.5 V7" fill="none" stroke="#fff" stroke-width="1.7"/><path d="M5.5 10.5 L6 8 L12.5 1.5 L14.5 3.5 L8 10 Z" fill="#fff"/></svg><div class="t" style="left:27px;top:11px">修改</div></div>
<div class="ab" style="left:1561px;top:245.8px;background:#6aaa99"><svg class="a" style="left:6px;top:12px" width="15" height="11" viewBox="0 0 15 11"><path d="M0.8 5.5 Q7.5 -1.5 14.2 5.5 Q7.5 12.5 0.8 5.5 Z" fill="none" stroke="#fff" stroke-width="1.4"/><circle cx="7.5" cy="5.5" r="2.2" fill="none" stroke="#fff" stroke-width="1.3"/></svg><div class="t" style="left:26px;top:11px">查看</div></div>
<div class="a" style="left:3px;top:397.0px;width:15px;height:15px;border:1px solid #e3e5e8;border-radius:3px;background:#fff"></div>
<div class="td" style="left:59px;top:398.5px">3</div>
<div class="td" style="left:115px;top:398.5px">路线名称6</div>
<div class="td" style="left:431px;top:398.5px">路线类型6</div>
<div class="td" style="left:521px;top:398.5px">居住酒店6</div>
<div class="td" style="left:612px;top:398.5px">春</div>
<div class="td" style="left:702px;top:398.5px">步行</div>
<div class="td" style="left:792px;top:398.5px">起点6</div>
<div class="td" style="left:882px;top:398.5px">终点6</div>
<div class="td" style="left:972px;top:398.5px">6</div>
<div class="td" style="left:1062px;top:398.5px">2024-04-10</div>
<div class="td" style="left:1153px;top:398.5px">6</div>
<div class="td" style="left:1243px;top:398.5px">0</div>
<div class="td" style="left:1333px;top:398.5px">6</div>
<div class="a" style="left:205px;top:343.8px;width:113px;height:112px;overflow:hidden"><svg width="113" height="112" viewBox="0 0 113 112"><defs>
<filter id="b2" x="-10%" y="-10%" width="120%" height="120%"><feGaussianBlur stdDeviation="1.3"/></filter>
<linearGradient id="w2" x1="0" y1="0" x2="0" y2="1"><stop offset="0" stop-color="#4e5e34"/><stop offset="0.5" stop-color="#66763e"/><stop offset="1" stop-color="#7f93a0"/></linearGradient></defs>
<g filter="url(#b2)">
<rect x="-5" y="-5" width="123" height="122" fill="#b9d0e6"/>
<path d="M-5 -5 L8 -5 L18 20 L32 10 L45 5 L58 10 L70 8 L78 15 L95 0 L118 5 L118 72 L-5 72 Z" fill="#4a7232"/>
<ellipse cx="52" cy="46" rx="24" ry="22" fill="#93ab50"/>
<ellipse cx="106" cy="46" rx="14" ry="20" fill="#a6bc60"/>
<ellipse cx="8" cy="40" rx="12" ry="28" fill="#5e8a3a"/>
<rect x="80" y="48" width="14" height="9" fill="#3a3a32"/>
<rect x="-5" y="66" width="123" height="51" fill="url(#w2)"/>
<ellipse cx="25" cy="100" rx="22" ry="8" fill="#a0b4c4" opacity="0.7"/>
<ellipse cx="90" cy="102" rx="20" ry="6" fill="#8ea0ae" opacity="0.6"/>
</g></svg></div>
<div class="ab" style="left:1424px;top:380.5px;background:#6aaa99"><svg class="a" style="left:6px;top:12px" width="15" height="11" viewBox="0 0 15 11"><path d="M0.8 5.5 Q7.5 -1.5 14.2 5.5 Q7.5 12.5 0.8 5.5 Z" fill="none" stroke="#fff" stroke-width="1.4"/><circle cx="7.5" cy="5.5" r="2.2" fill="none" stroke="#fff" stroke-width="1.3"/></svg><div class="t" style="left:26px;top:11px">查看</div></div>
<div class="ab" style="left:1492px;top:380.5px;background:#f0ad6b"><svg class="a" style="left:6px;top:10px" width="16" height="16" viewBox="0 0 16 16"><path d="M9 1.5 H2.5 Q1.5 1.5 1.5 2.5 V13.5 Q1.5 14.5 2.5 14.5 H13.5 Q14.5 14.5 14.5 13.5 V7" fill="none" stroke="#fff" stroke-width="1.7"/><path d="M5.5 10.5 L6 8 L12.5 1.5 L14.5 3.5 L8 10 Z" fill="#fff"/></svg><div class="t" style="left:27px;top:11px">修改</div></div>
<div class="ab" style="left:1561px;top:380.5px;background:#6aaa99"><svg class="a" style="left:6px;top:12px" width="15" height="11" viewBox="0 0 15 11"><path d="M0.8 5.5 Q7.5 -1.5 14.2 5.5 Q7.5 12.5 0.8 5.5 Z" fill="none" stroke="#fff" stroke-width="1.4"/><circle cx="7.5" cy="5.5" r="2.2" fill="none" stroke="#fff" stroke-width="1.3"/></svg><div class="t" style="left:26px;top:11px">查看</div></div>
<div class="a" style="left:3px;top:531.8px;width:15px;height:15px;border:1px solid #e3e5e8;border-radius:3px;background:#fff"></div>
<div class="td" style="left:59px;top:533.2px">4</div>
<div class="td" style="left:115px;top:533.2px">路线名称5</div>
<div class="td" style="left:431px;top:533.2px">路线类型5</div>
<div class="td" style="left:521px;top:533.2px">居住酒店5</div>
<div class="td" style="left:612px;top:533.2px">春</div>
<div class="td" style="left:702px;top:533.2px">步行</div>
<div class="td" style="left:792px;top:533.2px">起点5</div>
<div class="td" style="left:882px;top:533.2px">终点5</div>
<div class="td" style="left:972px;top:533.2px">5</div>
<div class="td" style="left:1062px;top:533.2px">2024-04-10</div>
<div class="td" style="left:1153px;top:533.2px">5</div>
<div class="td" style="left:1243px;top:533.2px">0</div>
<div class="td" style="left:1333px;top:533.2px">5</div>
<div class="a" style="left:205px;top:478.5px;width:113px;height:112px;overflow:hidden"><svg width="113" height="112" viewBox="0 0 113 112"><defs>
<filter id="b3" x="-10%" y="-10%" width="120%" height="120%"><feGaussianBlur stdDeviation="1.1"/></filter>
<linearGradient id="s3" x1="0" y1="0" x2="0" y2="1"><stop offset="0" stop-color="#e9eee9"/><stop offset="1" stop-color="#d2ddd4"/></linearGradient>
<linearGradient id="m3" x1="0" y1="0" x2="0" y2="1"><stop offset="0" stop-color="#7e9a8a"/><stop offset="0.4" stop-color="#5e9468"/><stop offset="1" stop-color="#4a9040"/></linearGradient></defs>
<g filter="url(#b3)">
<rect x="-5" y="-5" width="123" height="122" fill="url(#s3)"/>
<path d="M-5 34 L2 26 L6 28 L10 32 L22 20 L30 16 L36 20 L42 17 L48 22 L55 14 L62 16 L66 26 L75 28 L90 22 L100 12 L108 10 L118 12 L118 117 L-5 117 Z" fill="url(#m3)"/>
<path d="M54 22 L64 20 L64 42 L58 44 Z" fill="#a88a88" opacity="0.55"/>
<path d="M26 24 L36 22 L36 40 L28 40 Z" fill="#8e8a84" opacity="0.4"/>
<path d="M-5 62 L20 58 L32 72 L22 117 L-5 117 Z" fill="#48983c"/>
<path d="M118 38 L96 44 L82 60 L74 78 L118 100 Z" fill="#64b444"/>
<ellipse cx="12" cy="74" rx="14" ry="6" fill="#8a5a52" opacity="0.55"/>
<ellipse cx="100" cy="90" rx="20" ry="12" fill="#78c050" opacity="0.8"/>
<path d="M28 117 L50 80 L74 80 L110 117 Z" fill="#c8ccc8"/>
<rect x="40" y="63" width="11" height="34" rx="4" fill="#e6ece4"/>
<circle cx="45" cy="61" r="3" fill="#3a3030"/>
<rect x="76" y="67" width="10" height="31" rx="4" fill="#f0e4dc"/>
<circle cx="81" cy="66" r="3" fill="#3a3030"/>
<rect x="58" y="82" width="7" height="15" rx="2" fill="#a8cce8"/>
</g></svg></div>
<div class="ab" style="left:1424px;top:515.2px;background:#6aaa99"><svg class="a" style="left:6px;top:12px" width="15" height="11" viewBox="0 0 15 11"><path d="M0.8 5.5 Q7.5 -1.5 14.2 5.5 Q7.5 12.5 0.8 5.5 Z" fill="none" stroke="#fff" stroke-width="1.4"/><circle cx="7.5" cy="5.5" r="2.2" fill="none" stroke="#fff" stroke-width="1.3"/></svg><div class="t" style="left:26px;top:11px">查看</div></div>
<div class="ab" style="left:1492px;top:515.2px;background:#f0ad6b"><svg class="a" style="left:6px;top:10px" width="16" height="16" viewBox="0 0 16 16"><path d="M9 1.5 H2.5 Q1.5 1.5 1.5 2.5 V13.5 Q1.5 14.5 2.5 14.5 H13.5 Q14.5 14.5 14.5 13.5 V7" fill="none" stroke="#fff" stroke-width="1.7"/><path d="M5.5 10.5 L6 8 L12.5 1.5 L14.5 3.5 L8 10 Z" fill="#fff"/></svg><div class="t" style="left:27px;top:11px">修改</div></div>
<div class="ab" style="left:1561px;top:515.2px;background:#6aaa99"><svg class="a" style="left:6px;top:12px" width="15" height="11" viewBox="0 0 15 11"><path d="M0.8 5.5 Q7.5 -1.5 14.2 5.5 Q7.5 12.5 0.8 5.5 Z" fill="none" stroke="#fff" stroke-width="1.4"/><circle cx="7.5" cy="5.5" r="2.2" fill="none" stroke="#fff" stroke-width="1.3"/></svg><div class="t" style="left:26px;top:11px">查看</div></div>
<div class="a" style="left:3px;top:666.5px;width:15px;height:15px;border:1px solid #e3e5e8;border-radius:3px;background:#fff"></div>
<div class="td" style="left:59px;top:668.0px">5</div>
<div class="td" style="left:115px;top:668.0px">路线名称4</div>
<div class="td" style="left:431px;top:668.0px">路线类型4</div>
<div class="td" style="left:521px;top:668.0px">居住酒店4</div>
<div class="td" style="left:612px;top:668.0px">春</div>
<div class="td" style="left:702px;top:668.0px">步行</div>
<div class="td" style="left:792px;top:668.0px">起点4</div>
<div class="td" style="left:882px;top:668.0px">终点4</div>
<div class="td" style="left:972px;top:668.0px">4</div>
<div class="td" style="left:1062px;top:668.0px">2024-04-10</div>
<div class="td" style="left:1153px;top:668.0px">4</div>
<div class="td" style="left:1243px;top:668.0px">0</div>
<div class="td" style="left:1333px;top:668.0px">4</div>
<div class="a" style="left:205px;top:613.3px;width:113px;height:112px;overflow:hidden"><svg width="113" height="112" viewBox="0 0 113 112"><defs>
<filter id="b4" x="-10%" y="-10%" width="120%" height="120%"><feGaussianBlur stdDeviation="1.1"/></filter>
<linearGradient id="s4" x1="0" y1="0" x2="0" y2="1"><stop offset="0" stop-color="#5aa6e0"/><stop offset="1" stop-color="#e4f0f6"/></linearGradient>
<linearGradient id="w4" x1="0" y1="0" x2="0" y2="1"><stop offset="0" stop-color="#0a56a6"/><stop offset="0.35" stop-color="#1a70b0"/><stop offset="0.6" stop-color="#2aa0a0"/><stop offset="1" stop-color="#40d098"/></linearGradient></defs>
<g filter="url(#b4)">
<rect x="-5" y="-5" width="123" height="122" fill="url(#s4)"/>
<rect x="-5" y="30" width="123" height="87" fill="url(#w4)"/>
<ellipse cx="70" cy="78" rx="30" ry="9" fill="#50e0a0" opacity="0.7"/>
<path d="M66 47 Q88 38 118 40 L118 49 Q95 51 66 47 Z" fill="#2e6a3a"/>
<path d="M84 86 Q104 72 110 56 L118 52 L118 117 L86 117 Z" fill="#e6dcb8"/>
<path d="M-5 90 Q30 80 70 86 Q96 90 106 70 L118 66 L118 117 L-5 117 Z" fill="#4a9a30"/>
<ellipse cx="38" cy="100" rx="36" ry="10" fill="#66b444" opacity="0.6"/>
</g></svg></div>
<div class="ab" style="left:1424px;top:650.0px;background:#6aaa99"><svg class="a" style="left:6px;top:12px" width="15" height="11" viewBox="0 0 15 11"><path d="M0.8 5.5 Q7.5 -1.5 14.2 5.5 Q7.5 12.5 0.8 5.5 Z" fill="none" stroke="#fff" stroke-width="1.4"/><circle cx="7.5" cy="5.5" r="2.2" fill="none" stroke="#fff" stroke-width="1.3"/></svg><div class="t" style="left:26px;top:11px">查看</div></div>
<div class="ab" style="left:1492px;top:650.0px;background:#f0ad6b"><svg class="a" style="left:6px;top:10px" width="16" height="16" viewBox="0 0 16 16"><path d="M9 1.5 H2.5 Q1.5 1.5 1.5 2.5 V13.5 Q1.5 14.5 2.5 14.5 H13.5 Q14.5 14.5 14.5 13.5 V7" fill="none" stroke="#fff" stroke-width="1.7"/><path d="M5.5 10.5 L6 8 L12.5 1.5 L14.5 3.5 L8 10 Z" fill="#fff"/></svg><div class="t" style="left:27px;top:11px">修改</div></div>
<div class="ab" style="left:1561px;top:650.0px;background:#6aaa99"><svg class="a" style="left:6px;top:12px" width="15" height="11" viewBox="0 0 15 11"><path d="M0.8 5.5 Q7.5 -1.5 14.2 5.5 Q7.5 12.5 0.8 5.5 Z" fill="none" stroke="#fff" stroke-width="1.4"/><circle cx="7.5" cy="5.5" r="2.2" fill="none" stroke="#fff" stroke-width="1.3"/></svg><div class="t" style="left:26px;top:11px">查看</div></div>
</div>
<div class="a" id="sbar"></div>
<svg class="a" style="left:1907px;top:8px" width="11" height="10" viewBox="0 0 11 10"><path d="M5.5 1 L10.5 9 H0.5 Z" fill="#8a8a8a"/></svg>
<div class="a" style="left:1908px;top:26px;width:9px;height:653px;background:#8a8a8a;border-radius:4.5px"></div>
<svg class="a" style="left:1907px;top:1005px" width="11" height="10" viewBox="0 0 11 10"><path d="M5.5 9 L10.5 1 H0.5 Z" fill="#8a8a8a"/></svg>
<div class="wm" style="left:-10px;top:554px">down.code365.top</div>
<div class="wm" style="left:848px;top:554px">down.code365.top</div>
<div class="wm" style="left:1705px;top:554px">down.code365.top</div>
<div class="a" style="left:0;top:1023px;width:1920px;height:1px;background:#d3d8d8"></div>
</body></html>
